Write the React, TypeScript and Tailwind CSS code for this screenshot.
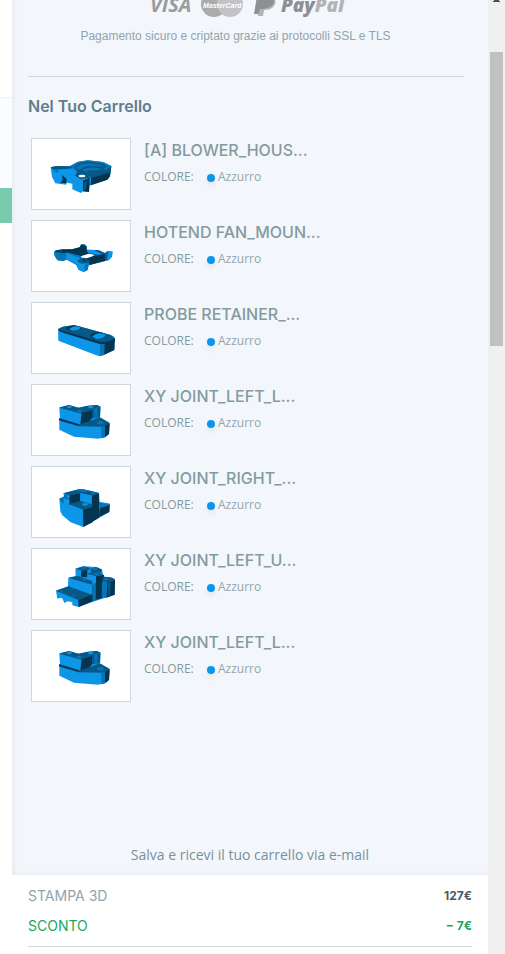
import type { ReactNode } from "react";

const BLUE = "#0d95e8";
const MID = "#0874b8";
const DEEP = "#075887";
const DARK = "#05344f";

function BlowerHousing() {
  return (
    <>
      <path d="M68 97 85 93 125 94 150 80 180 76 225 81 250 93 246 124 238 134 185 152 183 171 165 169 159 174 133 163 133 146 117 143 114 149 82 145 72 126Z" fill={BLUE} />
      <path d="M68 97 85 93 125 94 138 98 124 101 76 104Z" fill={DEEP} />
      <path d="M125 94 150 80 180 76 225 81 250 93 236 106 205 112 160 111 136 102Z" fill={MID} />
      <path d="M138 98 155 84 180 80 220 85 236 94 225 104 178 107 155 107Z" fill={DEEP} />
      <path d="M142 99 158 88 182 85 216 89 226 95 200 93 172 94 152 104Z" fill={MID} />
      <path d="M164 104Q184 93 220 101L205 107 168 108Z" fill={MID} />
      <path d="M250 94 246 124 238 134 188 151 190 122 236 110Z" fill={DARK} />
      <path d="M178 107 236 104 250 94 247 112 187 130Z" fill={DEEP} />
      <path d="M76 109 91 106 88 112Z M136 102 148 109 141 122 160 133 183 128 187 117 178 110Z" fill={DEEP} />
      <ellipse cx="162" cy="123" rx="10" ry="4" fill="#fff" />
      <path d="M165 137 185 128 183 171 165 169Z" fill={DARK} />
      <path d="M167 143 177 138 174 163 166 166Z" fill={DEEP} />
      <path d="M103 120 116 132 114 145 97 143 104 135Z" fill={DARK} />
    </>
  );
}

function FanMount() {
  return (
    <>
      <path d="M78 104 84 99 132 97 155 91 159 82 169 81 176 87 177 98 203 99 229 108 240 101 254 104 252 119 242 130 182 145 179 159 167 165 151 158 145 144 116 128 105 132 88 130 79 115Z" fill={MID} />
      <path d="M80 103 100 97 132 97 155 91 160 83 175 88 176 103 150 114 117 106 106 110Z" fill={DARK} />
      <path d="M115 107 156 124 148 143 115 127Z" fill={BLUE} />
      <path d="M79 104 97 110 114 107 114 128 104 132 90 130 81 119Z" fill={MID} />
      <ellipse cx="178" cy="117" rx="20" ry="7" fill="#fff" />
      <path d="M148 112 176 102 182 110 158 118Z" fill={DARK} />
      <path d="M177 98 203 99 229 108 225 114 204 112 180 106Z" fill={BLUE} />
      <path d="M197 99 214 100 230 108 224 112Z" fill={DEEP} />
      <path d="M171 126 198 116 232 110 231 131 185 144 181 134Z" fill={DARK} />
      <path d="M147 131 169 122 186 131 180 141 159 139Z" fill={DEEP} />
      <path d="M147 136 161 140 182 139 179 158 167 165 151 158Z" fill={BLUE} />
      <path d="M170 140 182 138 179 158 169 163Z" fill={MID} />
      <path d="M232 111 240 103 254 104 249 122 235 131Z" fill={BLUE} />
      <path d="M232 112 240 104 237 129 232 131Z" fill={DEEP} />
      <circle cx="169" cy="130" r="3" fill={DARK} />
      <circle cx="98" cy="103" r="4" fill={DEEP} />
    </>
  );
}

function ProbeRetainer() {
  return (
    <>
      <path d="M90 90 104 83 139 78 248 108Q261 112 261 122L259 153 226 169Q213 173 203 168L91 125Z" fill={BLUE} />
      <path d="M90 91 104 83 139 78 248 108 261 119 244 131 222 134 98 96Z" fill={DEEP} />
      <path d="M90 91 99 94 222 130 244 127 261 118 261 125 222 137 98 99Z" fill={DARK} />
      <path d="M225 135 260 122 259 153 225 169Z" fill={DARK} />
      <path d="M216 136 230 135 229 167 216 171Z" fill={MID} />
      <ellipse cx="137" cy="88" rx="22" ry="8" fill={DARK} />
      <path d="M122 91Q138 76 158 85Q154 96 133 95Z" fill={BLUE} />
      <ellipse cx="211" cy="110" rx="24" ry="10" fill={DARK} />
      <path d="M192 113Q210 96 234 107Q229 120 205 120Z" fill={BLUE} />
    </>
  );
}

function JointLeftLower() {
  return (
    <>
      <path d="M94 111 216 109 245 126 243 159 232 169 210 173 138 167 94 146Z" fill={BLUE} />
      <path d="M94 112 135 108 214 109 245 126 229 137 151 136 94 119Z" fill={DEEP} />
      <path d="M94 112 150 130 154 134 94 117Z" fill={DARK} />
      <path d="M229 136 245 127 243 159 230 169Z" fill={DARK} />
      <path d="M220 137 231 135 230 169 220 172Z" fill={MID} />
      <path d="M94 79 123 72 151 80 180 74 207 72 218 77 216 108 185 121 155 130 96 112Z" fill={BLUE} />
      <path d="M94 80 123 72 151 80 180 74 207 72 218 77 192 84 185 92 161 98Z" fill={DEEP} />
      <path d="M161 97 186 89 192 84 192 112 185 121 157 130Z" fill={DARK} />
      <path d="M192 84 217 78 216 109 192 112Z" fill={DEEP} />
      <path d="M199 83 209 81 208 110 199 112Z" fill={MID} />
      <ellipse cx="124" cy="78" rx="7" ry="4" fill={BLUE} />
      <ellipse cx="188" cy="78" rx="8" ry="4" fill={BLUE} />
      <ellipse cx="154" cy="90" rx="8" ry="4" fill={MID} />
      <ellipse cx="217" cy="125" rx="10" ry="5" fill={MID} />
    </>
  );
}

function JointRight() {
  return (
    <>
      <path d="M94 107 108 100 106 91 155 78 193 84 213 90 215 116 246 122 244 147 166 192 128 178 103 157 97 145Z" fill={BLUE} />
      <path d="M106 91 155 78 213 90 193 98 160 91 125 97Z" fill={DEEP} />
      <path d="M142 82 165 78 187 84 166 87Z" fill={MID} />
      <path d="M125 97 157 91 157 119 124 125Z" fill={DARK} />
      <path d="M157 91 193 98 190 124 157 116Z" fill={BLUE} />
      <path d="M192 98 213 91 213 164 190 178Z" fill={DARK} />
      <path d="M122 123 157 114 199 126 165 140Z" fill={DEEP} />
      <path d="M165 140 197 129 195 177 166 192Z" fill={DARK} />
      <path d="M195 134 213 126 212 164 195 169Z" fill={DARK} />
      <path d="M213 119 246 123 215 135Z" fill={MID} />
      <path d="M215 136 245 125 244 147 213 162Z" fill={DARK} />
      <path d="M94 107 107 102 107 122 97 114Z" fill={MID} />
      <path d="M109 95 125 99 124 110 110 106Z" fill={DEEP} />
      <path d="M113 98 125 99 120 109Z" fill={BLUE} />
      <ellipse cx="171" cy="124" rx="9" ry="4" fill={BLUE} />
      <ellipse cx="196" cy="91" rx="6" ry="3" fill={MID} />
    </>
  );
}

function JointLeftUpper() {
  return (
    <>
      <path d="M84 137 120 124 121 98 143 93 142 71 166 64 206 66 222 73 226 94 261 102 260 149 230 159 202 168 152 186 133 181 133 172 119 169 109 174 103 160 95 159 88 161Z" fill={BLUE} />
      <path d="M143 71 166 64 187 69 181 75 162 77Z M186 73 203 66 221 74 220 83 190 82Z" fill={DEEP} />
      <path d="M160 77 178 75 177 97 159 95Z" fill={DARK} />
      <path d="M121 98 151 93 193 109 192 119Z" fill={DEEP} />
      <path d="M176 86 197 80 226 88 203 93Z" fill={DEEP} />
      <path d="M204 94 228 89 224 158 193 168 194 119 204 115Z" fill={DARK} />
      <path d="M195 116 204 112 203 166 194 168Z" fill={MID} />
      <path d="M84 137 122 124 191 149 151 165Z" fill={DEEP} />
      <path d="M151 165 193 148 193 169 152 186Z" fill={DARK} />
      <path d="M226 96 249 97 261 103 238 112 222 108Z" fill={DEEP} />
      <path d="M222 109 237 112 236 159 221 155Z" fill={MID} />
      <path d="M238 112 261 104 260 149 236 158Z" fill={DARK} />
      <path d="M240 114 248 111 246 152 240 154Z" fill={DEEP} />
      <g fill={MID}>
        <ellipse cx="166" cy="69" rx="7" ry="3" />
        <ellipse cx="201" cy="72" rx="8" ry="3" />
        <ellipse cx="204" cy="87" rx="8" ry="3" />
        <ellipse cx="234" cy="103" rx="7" ry="3" />
        <ellipse cx="170" cy="103" rx="7" ry="3" />
        <ellipse cx="136" cy="130" rx="4" ry="2" />
        <ellipse cx="101" cy="140" rx="4" ry="2" />
        <ellipse cx="137" cy="153" rx="4" ry="2" />
      </g>
    </>
  );
}

const ITEMS: { name: string; drawing: ReactNode }[] = [
  { name: "[A] BLOWER_HOUS...", drawing: <BlowerHousing /> },
  { name: "HOTEND FAN_MOUN...", drawing: <FanMount /> },
  { name: "PROBE RETAINER_...", drawing: <ProbeRetainer /> },
  { name: "XY JOINT_LEFT_L...", drawing: <JointLeftLower /> },
  { name: "XY JOINT_RIGHT_...", drawing: <JointRight /> },
  { name: "XY JOINT_LEFT_U...", drawing: <JointLeftUpper /> },
  { name: "XY JOINT_LEFT_L...", drawing: <JointLeftLower /> },
];

function PaymentLogos() {
  return (
    <svg viewBox="0 0 200 18" className="h-[18px] w-[200px] font-['Open_Sans',sans-serif] font-bold italic">
      <text x="0" y="12" fontSize="20" fill="#999b9e">VISA</text>
      <circle cx="64" cy="4" r="13" fill="#a9abad" />
      <circle cx="80" cy="4" r="13" fill="#c1c3c5" />
      <text x="53" y="8" fontSize="7" fill="#fff" className="font-['Liberation_Sans',sans-serif]">
        MasterCard
      </text>
      <path d="M107-4H119Q127-3 124 4Q121 9 113 9L112 14H104Z" fill="#8d8f92" />
      <path d="M124-2Q127 1 124 6Q121 10 114 10L113 16H108L110 9Q121 9 124 3Z" fill="#b1b3b5" />
      <text x="131" y="12" fontSize="19" fontWeight="800" fill="#8d8f92">
        Pay<tspan fill="#b1b3b5">Pal</tspan>
      </text>
    </svg>
  );
}

function CartItem({ name, drawing }: { name: string; drawing: ReactNode }) {
  return (
    <li className="flex gap-[13px]">
      <div className="h-[72px] w-[100px] shrink-0 border border-[#cfd8dc] bg-white">
        <svg viewBox="12 12 294 210" className="h-full w-full">{drawing}</svg>
      </div>
      <div className="min-w-0">
        <h3 className="truncate font-['Inter',sans-serif] text-[16px] leading-6 font-medium text-[#839b9f]">{name}</h3>
        <p className="mt-[5px] flex items-center text-[12px] leading-5 text-[#839b9f]">
          <span className="w-[63px]">COLORE:</span>
          <span className="mr-[3px] mt-px h-2 w-2 rounded-full bg-[#0d95e8] shadow-md" />
          <span className="text-[#94a6aa]">Azzurro</span>
        </p>
      </div>
    </li>
  );
}

export default function App() {
  return (
    <div className="flex h-screen overflow-hidden bg-white font-['Open_Sans',sans-serif]">
      <div className="flex w-3 shrink-0 flex-col">
        <div className="h-[97px] shrink-0 bg-white" />
        <div className="h-[91px] shrink-0 border-t border-[#edf0f4] bg-[#fafcff]" />
        <div className="h-[35px] shrink-0 bg-[#78ccad]" />
      </div>

      <aside className="flex min-w-0 flex-1 flex-col bg-[#f3f7fc]">
        <div className="flex min-h-0 flex-1 flex-col px-4 shadow-[inset_4px_-3px_4px_-2px_#e6ebf1]">
          <div className="mr-2 flex flex-col items-center border-b border-[#cfd8dc] pb-[31px]">
            <div className="pl-2">
              <PaymentLogos />
            </div>
            <p className="mt-[9px] pr-[21px] font-['Liberation_Sans',Arial,sans-serif] text-[12px] leading-[18px] whitespace-nowrap text-[#90a4ae]">
              Pagamento sicuro e criptato grazie ai protocolli SSL e TLS
            </p>
          </div>

          <h2 className="mt-[17px] font-['Inter',sans-serif] text-[16px] leading-6 font-semibold text-[#607d8b]">
            Nel Tuo Carrello
          </h2>
          <ul className="mt-5 flex flex-col gap-[10px] pl-[3px]">
            {ITEMS.map((item, i) => (
              <CartItem key={i} {...item} />
            ))}
          </ul>
          <a href="#" className="mt-auto mb-2 text-center text-[14px] leading-6 text-[#78909c]">
            Salva e ricevi il tuo carrello via e-mail
          </a>
        </div>

        <footer className="h-[79px] shrink-0 bg-white px-4 pt-[6px] font-['Inter',sans-serif]">
          <dl className="border-b border-[#cfd8dc] pb-[5px] text-[14px] leading-[30px]">
            <div className="flex justify-between text-[#90a4ae]">
              <dt>STAMPA 3D</dt>
              <dd className="text-[12px] font-bold text-[#455a64]">127€</dd>
            </div>
            <div className="flex justify-between text-[#1ba660]">
              <dt>SCONTO</dt>
              <dd className="text-[12px] font-bold">− 7€</dd>
            </div>
          </dl>
        </footer>
      </aside>

      <div className="flex w-[17px] shrink-0 flex-col items-center bg-[#f0f0f0]">
        <svg viewBox="0 0 7 3" className="h-[3px] w-[7px]">
          <path d="M1 0h5v1h1v1H0V1h1z" fill="#505050" />
        </svg>
        <div className="mt-[49px] h-[294px] w-[13px] bg-[#c1c1c1]" />
      </div>
    </div>
  );
}
